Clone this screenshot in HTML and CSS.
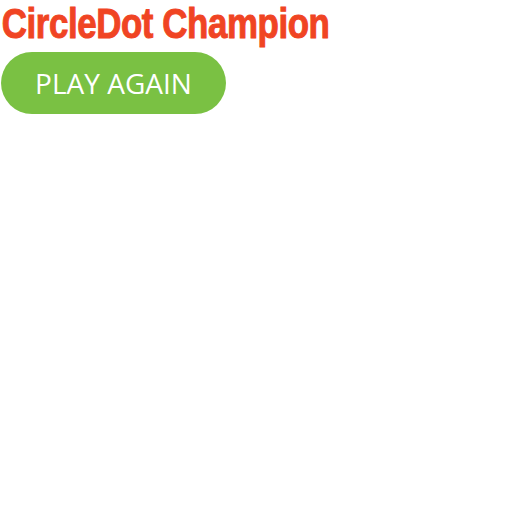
FILE: index.html
```html
<!DOCTYPE html>
<html>
<head>
<meta charset="utf-8">
<link rel="stylesheet" href="styles.css">
</head>
<body>
<h1 class="title">CircleDot Champion</h1>
<button class="play">PLAY AGAIN</button>
</body>
</html>
```

FILE: styles.css
```css
html, body { margin: 0; padding: 0; background: #fff; }
body { padding: 0 0 0 1px; }
.title {
  margin: 0;
  padding: 2px 0 0 1px;
  font-family: "Liberation Sans", sans-serif;
  font-weight: bold;
  font-size: 42px;
  line-height: 44px;
  color: #f04423;
  letter-spacing: -0.5px;
  -webkit-text-stroke: 1px #f04423;
  transform: scaleX(0.83);
  transform-origin: left top;
  white-space: nowrap;
}
.play {
  display: block;
  margin-top: 6px;
  width: 225px;
  height: 62px;
  border: none;
  border-radius: 31px;
  background: #7ac143;
  color: #fff;
  font-family: "Open Sans", sans-serif;
  font-size: 28px;
  padding: 0;
}
```
